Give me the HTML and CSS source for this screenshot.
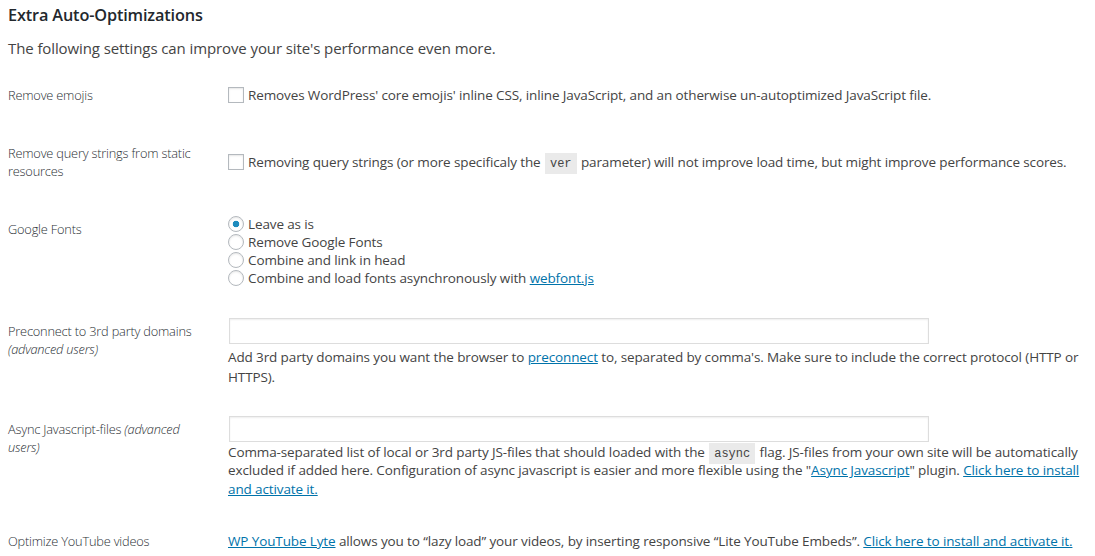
FILE: index.html
```html
<!DOCTYPE html>
<html>
<head>
  <meta charset="utf-8">
  <link rel="stylesheet" href="styles.css">
</head>
<body>
  <h2 class="title">Extra Auto-Optimizations</h2>
  <p class="intro">The following settings can improve your site's performance even more.</p>

  <table class="form-table">
    <tr>
      <th>Remove emojis</th>
      <td>
        <label class="check"><input type="checkbox">Removes WordPress' core emojis' inline CSS, inline JavaScript, and an otherwise un-autoptimized JavaScript file.</label>
      </td>
    </tr>
    <tr>
      <th>Remove query strings from static resources</th>
      <td>
        <label class="check"><input type="checkbox">Removing query strings (or more specificaly the <code>ver</code> parameter) will not improve load time, but might improve performance scores.</label>
      </td>
    </tr>
    <tr>
      <th>Google Fonts</th>
      <td>
        <div class="radios">
          <label><input type="radio" name="gfonts" checked>Leave as is</label>
          <label><input type="radio" name="gfonts">Remove Google Fonts</label>
          <label><input type="radio" name="gfonts">Combine and link in head</label>
          <label><input type="radio" name="gfonts">Combine and load fonts asynchronously with <a href="#">webfont.js</a></label>
        </div>
      </td>
    </tr>
    <tr class="row-preconnect">
      <th>Preconnect to 3rd party domains <em>(advanced users)</em></th>
      <td>
        <input type="text" class="text-input">
        <p class="desc">Add 3rd party domains you want the browser to <a href="#">preconnect</a> to, separated by comma's. Make sure to include the correct protocol (HTTP or HTTPS).</p>
      </td>
    </tr>
    <tr class="row-async">
      <th>Async Javascript-files <em>(advanced users)</em></th>
      <td>
        <input type="text" class="text-input">
        <p class="desc tight">Comma-separated list of local or 3rd party JS-files that should loaded with the <code>async</code> flag. JS-files from your own site will be automatically excluded if added here. Configuration of async javascript is easier and more flexible using the "<a href="#">Async Javascript</a>" plugin. <a href="#">Click here to install and activate it.</a></p>
      </td>
    </tr>
    <tr>
      <th>Optimize YouTube videos</th>
      <td>
        <a href="#">WP YouTube Lyte</a> allows you to “lazy load” your videos, by inserting responsive “Lite YouTube Embeds”. <a href="#">Click here to install and activate it.</a>
      </td>
    </tr>
  </table>
</body>
</html>
```

FILE: styles.css
```css
body {
  margin: 0;
  padding: 3px 0 0 8px;
  font-family: "Open Sans", "Noto Sans", sans-serif;
  font-size: 13.5px;
  letter-spacing: -0.12px;
  color: #444;
  background-color: #fff;
}

a {
  color: #0073aa;
  text-decoration: underline;
}

code {
  font-family: "Liberation Mono", monospace;
  font-size: 12px;
  line-height: 1;
  letter-spacing: 0;
  background-color: #eaeaea;
  padding: 4px 5px 3px;
  margin: 0 1px;
}

.title {
  margin: 0;
  font-size: 16.3px;
  letter-spacing: -0.15px;
  font-weight: 600;
  line-height: 24px;
  color: #23282d;
}

.intro {
  margin: 9px 0 6px;
  font-size: 15px;
  letter-spacing: -0.1px;
  line-height: 24px;
}

.form-table {
  width: 100%;
  border-collapse: collapse;
  table-layout: fixed;
}

.form-table th {
  width: 200px;
  padding: 20px 10px 20px 0;
  text-align: left;
  vertical-align: top;
  font-size: 12.8px;
  letter-spacing: -0.2px;
  font-weight: 300;
  line-height: 18px;
  color: #2c3136;
}

.form-table th em {
  font-style: italic;
}

.form-table td {
  padding: 15px 0 15px 10px;
  vertical-align: middle;
  line-height: 20px;
}

.form-table .row-preconnect td {
  padding-bottom: 13px;
}

.form-table .row-async td {
  padding-bottom: 14px;
}

input[type="checkbox"],
input[type="radio"] {
  -webkit-appearance: none;
  appearance: none;
  width: 16px;
  height: 16px;
  margin: 0 4px 0 0;
  border: 1px solid #b4b9be;
  background-color: #fff;
  box-shadow: inset 0 1px 2px rgba(0, 0, 0, 0.1);
  vertical-align: -3px;
}

input[type="radio"] {
  border-radius: 50%;
}

input[type="radio"]:checked {
  background: radial-gradient(circle, #1e8cbe 0, #1e8cbe 3px, #fff 3.6px);
}

.radios label {
  display: block;
  line-height: 18px;
}

.text-input {
  display: block;
  box-sizing: border-box;
  width: 700px;
  height: 26px;
  margin: 1px;
  padding: 3px 5px;
  border: 1px solid #ddd;
  box-shadow: inset 0 1px 2px rgba(0, 0, 0, 0.07);
}

.desc {
  margin: 3px 0 0;
  line-height: 20px;
}

.desc.tight {
  margin-top: 0;
  line-height: 18.3px;
}
```
